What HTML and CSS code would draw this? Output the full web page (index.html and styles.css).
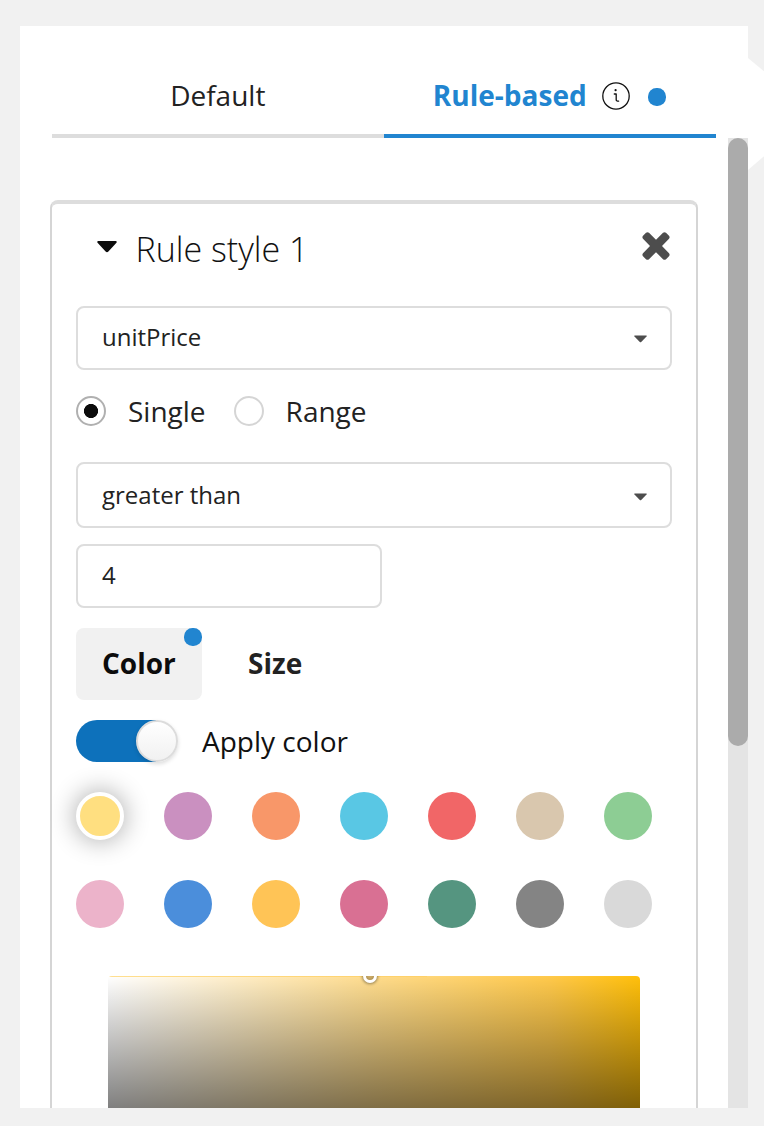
FILE: index.html
```html
<!DOCTYPE html>
<html lang="en">
<head>
<meta charset="utf-8">
<title>Rule style</title>
<link rel="stylesheet" href="styles.css">
</head>
<body>
<main class="panel">
  <svg class="pointer" width="16" height="112" viewBox="0 0 16 112"><path d="M0 0L16 13.3V98.3L0 112Z" fill="#fff"/></svg>
  <nav class="tabs">
    <div class="tab"><span>Default</span></div>
    <div class="tab tab-active">
      <span>Rule-based</span>
      <svg class="info" width="28" height="28" viewBox="0 0 28 28" fill="none" stroke="#111" stroke-linecap="round" stroke-linejoin="round"><circle cx="14" cy="14" r="13.2" stroke-width="1.3"/><path d="M12.3 12H14.2V17.7Q14.2 19.2 16.6 19.2" stroke-width="1.3"/><circle cx="13.6" cy="8.2" r="1.1" fill="#111" stroke="none"/></svg>
      <span class="dot"></span>
    </div>
  </nav>
  <div class="viewport">
    <section class="card">
      <header class="card-head">
        <svg class="caret" width="20" height="12" viewBox="0 0 20 12"><path d="M1 0H19Q20.6 .8 19 2.3L11.4 10.5Q10 11.8 8.6 10.5L1 2.3Q-.6 .8 1 0Z" fill="#0c0c0c"/></svg>
        <h2 class="title">Rule style 1</h2>
        <svg class="close" width="28" height="28" viewBox="0 0 28 28"><path d="M4 .8Q5.5-.5 7 .8L14 7.8L21 .8Q22.5-.5 24 .8L27 3.8Q28.2 5.3 27 6.8L20 14L27 21.2Q28.2 22.7 27 24.2L24 27.2Q22.5 28.5 21 27.2L14 20.2L7 27.2Q5.5 28.5 4 27.2L1 24.2Q-.2 22.7 1 21.2L8 14L1 6.8Q-.2 5.3 1 3.8Z" fill="#4d4d4d"/></svg>
      </header>
      <div class="field">
        <span>unitPrice</span>
        <svg width="14" height="8" viewBox="0 0 14 8"><path d="M.7 .5H12.3Q13.3 .7 12.3 1.8L7.2 7Q6.5 7.6 5.8 7L.7 1.8Q-.3 .7 .7 .5Z" fill="#4d4d4d"/></svg>
      </div>
      <div class="radios">
        <label class="radio"><span class="ring ring-on"></span>Single</label>
        <label class="radio"><span class="ring"></span>Range</label>
      </div>
      <div class="field field-operator">
        <span>greater than</span>
        <svg width="14" height="8" viewBox="0 0 14 8"><path d="M.7 .5H12.3Q13.3 .7 12.3 1.8L7.2 7Q6.5 7.6 5.8 7L.7 1.8Q-.3 .7 .7 .5Z" fill="#4d4d4d"/></svg>
      </div>
      <div class="field field-value"><span>4</span></div>
      <div class="pills">
        <div class="pill pill-active">Color<span class="dot pill-dot"></span></div>
        <div class="pill">Size</div>
      </div>
      <div class="apply"><span class="switch"><span class="knob"></span></span><span>Apply color</span></div>
      <div class="swatches">
        <i class="swatch yellow selected"></i><i class="swatch purple"></i><i class="swatch orange"></i><i class="swatch cyan"></i><i class="swatch red"></i><i class="swatch tan"></i><i class="swatch green"></i>
        <i class="swatch pink"></i><i class="swatch blue"></i><i class="swatch amber"></i><i class="swatch rose"></i><i class="swatch teal"></i><i class="swatch gray"></i><i class="swatch silver"></i>
      </div>
      <div class="picker"><span class="handle"></span></div>
    </section>
    <div class="scrollbar"><div class="thumb"></div></div>
  </div>
</main>
</body>
</html>
```
FILE: styles.css
```css
* { box-sizing: border-box; }
body {
  margin: 0;
  height: 1126px;
  padding: 26px 16px 18px 20px;
  overflow: hidden;
  background: #f1f1f1;
  color: #222;
  font: 28px/40px "Open Sans", sans-serif;
}
svg { display: block; flex: none; }
.panel {
  position: relative;
  height: 1082px;
  display: flex;
  flex-direction: column;
  background: #fff;
}
.pointer { position: absolute; left: 100%; top: 32px; }
.tabs { display: flex; flex: none; height: 112px; padding: 0 32px; }
.tab {
  flex: 1;
  display: flex;
  justify-content: center;
  align-items: center;
  padding-top: 32px;
  border-bottom: 4px solid #ddd;
}
.tab > span:first-child { margin-bottom: 2px; }
.tab-active { padding-right: 1px; border-color: #2185d0; color: #2185d0; font-weight: 700; }
.info { margin: 0 18px 0 15px; }
.dot { width: 18px; height: 18px; border-radius: 8.5px; background: #2185d0; }
.tab .dot { margin-top: 2px; }
.viewport { display: flex; flex: 1; min-height: 0; overflow: hidden; justify-content: space-between; }
.card {
  width: 648px;
  height: 1100px;
  margin: 62px 0 0 30px;
  padding: 0 24px;
  border: 2px solid #d5d5d5;
  border-top: 4px solid #ddd;
  border-radius: 8px;
}
.card-head { display: flex; align-items: center; height: 84px; margin-bottom: 18px; padding: 0 2px 0 20.5px; }
.caret { margin-top: 2px; }
.title { margin: 6px auto 0 19px; color: #111; font-size: 34px; font-weight: 300; line-height: 48px; }
.field {
  display: flex;
  align-items: center;
  justify-content: space-between;
  height: 64px;
  padding: 0 22px 0 24px;
  border: 2px solid #ddd;
  border-radius: 8px;
  font-size: 24px;
  line-height: 34px;
}
.field span { margin-top: -2px; }
.field svg { margin-top: 2px; }
.radios { display: flex; align-items: center; gap: 28px; height: 82px; margin-bottom: 10px; }
.radio { display: flex; align-items: center; gap: 22px; }
.ring { width: 30px; height: 30px; border: 2px solid #d5d5d5; border-radius: 50%; }
.ring-on { border-color: #b0b0b0; background: radial-gradient(circle, #0c0c0c 6.7px, #fff 7.4px); }
.field-operator { height: 66px; margin-bottom: 16px; }
.field-operator span { margin-top: 0; }
.field-operator svg { margin-top: 4px; }
.field-value { width: 306px; margin-bottom: 20px; }
.pills { display: flex; gap: 20px; height: 72px; font-weight: 700; }
.pill { position: relative; padding: 15px 26px; border-radius: 8px; }
.pill-active { width: 126px; background: #f1f1f1; color: #0c0c0c; }
.pill-dot { position: absolute; right: 0; top: 0; }
.apply { display: flex; align-items: center; gap: 24px; height: 42px; margin: 20px 0 30px; color: #111; }
.switch { width: 102px; height: 42px; padding-left: 60px; border-radius: 21px; background: linear-gradient(90deg, #0d71bb 80px, transparent 80px); }
.knob {
  display: block;
  width: 42px;
  height: 42px;
  border: 2px solid #dcdcdc;
  border-radius: 50%;
  background: linear-gradient(#fff, #f1f1f1);
  box-shadow: 0 2px 4px rgba(0, 0, 0, .14);
}
.swatches { display: grid; grid-template-columns: repeat(7, 48px); gap: 40px; margin-bottom: 48px; }
.swatch { height: 48px; border-radius: 50%; }
.selected { border: 4px solid #fff; box-shadow: 0 0 24px 2px rgba(0, 0, 0, .3); }
.yellow { background: #ffdf80; }
.purple { background: #ca90c0; }
.orange { background: #f89769; }
.cyan { background: #59c7e4; }
.red { background: #f16667; }
.tan { background: #d9c7ae; }
.green { background: #8dcd94; }
.pink { background: #ecb3ca; }
.blue { background: #4b8edb; }
.amber { background: #ffc456; }
.rose { background: #d97093; }
.teal { background: #559580; }
.gray { background: #848484; }
.silver { background: #d9d9d9; }
.picker {
  position: relative;
  height: 264px;
  margin: 0 32px;
  overflow: hidden;
  border-radius: 4px;
  background:
    linear-gradient(90deg, #ffdf90, #ffd067) 0 0 / 60% 1px no-repeat,
    linear-gradient(transparent, #000),
    linear-gradient(90deg, #fff, #ffdc8c 50%, #ffc94b 83%, #ffbf0a);
}
.handle {
  position: absolute;
  left: 255px;
  top: -7px;
  width: 14px;
  height: 14px;
  border: 3px solid #fff;
  border-radius: 50%;
  background: #cbaa66;
  box-shadow: 0 0 3px 1px rgba(0, 0, 0, .4), inset 0 0 2px 1px rgba(0, 0, 0, .15);
}
.scrollbar { width: 20px; background: #e4e4e4; }
.thumb { height: 608px; border-radius: 10px; background: #ababab; }
```
